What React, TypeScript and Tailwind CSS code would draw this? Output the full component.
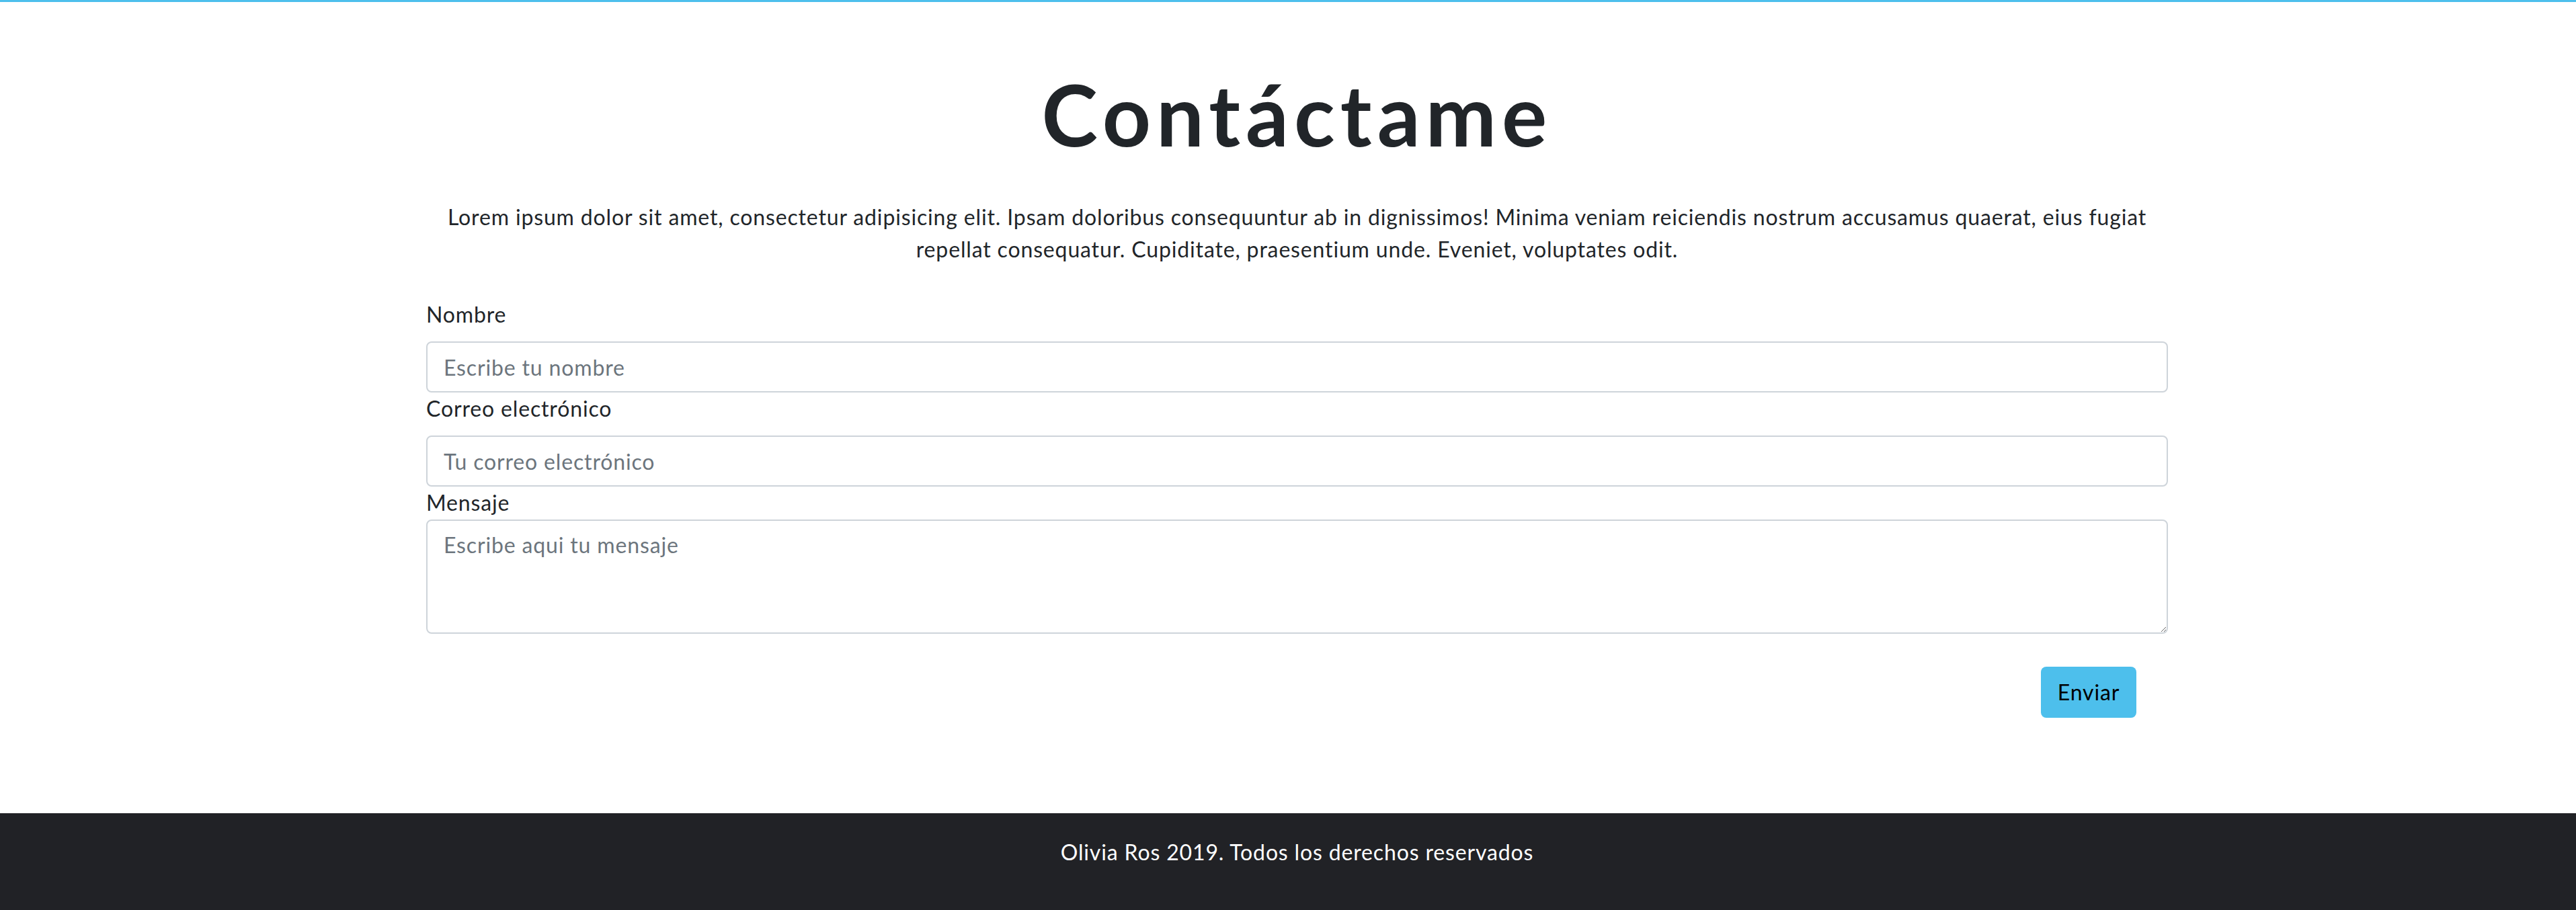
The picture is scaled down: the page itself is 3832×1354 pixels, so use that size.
const fields = [
    { label: "Nombre", placeholder: "Escribe tu nombre", type: "text" },
    { label: "Correo electrónico", placeholder: "Tu correo electrónico", type: "email" },
];

const App = () => {
    return (
        <div className="min-h-screen bg-white text-[#212529] tracking-[0.85px] font-['Lato','Open_Sans',sans-serif] border-t-[3px] border-[#4dbfec]">
            <div className="pl-[27px]">
                <div className="w-[2591px] mx-auto">
                    <h1 className="mt-[92px] text-center text-[126px] leading-[150px] tracking-[8px] font-bold">Contáctame</h1>

                    <p className="mt-[54px] text-center text-[32px] leading-[48px]">
                        Lorem ipsum dolor sit amet, consectetur adipisicing elit. Ipsam doloribus consequuntur ab in dignissimos! Minima veniam reiciendis nostrum accusamus quaerat, eius fugiat
                        <br />
                        repellat consequatur. Cupiditate, praesentium unde. Eveniet, voluptates odit.
                    </p>

                    <form className="mt-[49px] text-[32px] leading-[48px]">
                        {fields.map((f) => (
                            <div key={f.label}>
                                <label className="block mb-[16px]">{f.label}</label>
                                <input
                                    type={f.type}
                                    placeholder={f.placeholder}
                                    className="block w-full h-[76px] px-[24px] border-2 border-[#ced4da] rounded-[8px] placeholder:text-[#6c757d] outline-none"
                                />
                            </div>
                        ))}
                        <label className="block mb-px">Mensaje</label>
                        <textarea
                            placeholder="Escribe aqui tu mensaje"
                            className="block w-full h-[170px] px-[24px] py-[12px] border-2 border-[#ced4da] rounded-[8px] placeholder:text-[#6c757d] outline-none"
                        />

                        <div className="mt-[49px] flex justify-end pr-[47px]">
                            <button type="button" className="h-[76px] w-[142px] bg-[#4dbfec] rounded-[8px] text-black">
                                Enviar
                            </button>
                        </div>
                    </form>
                </div>
            </div>

            <footer className="mt-[142px] h-[144px] bg-[#212226] pt-[34px] pl-[27px]">
                <p className="text-center text-white text-[32px] leading-[48px]">Olivia Ros 2019. Todos los derechos reservados</p>
            </footer>
        </div>
    );
};

export default App;
